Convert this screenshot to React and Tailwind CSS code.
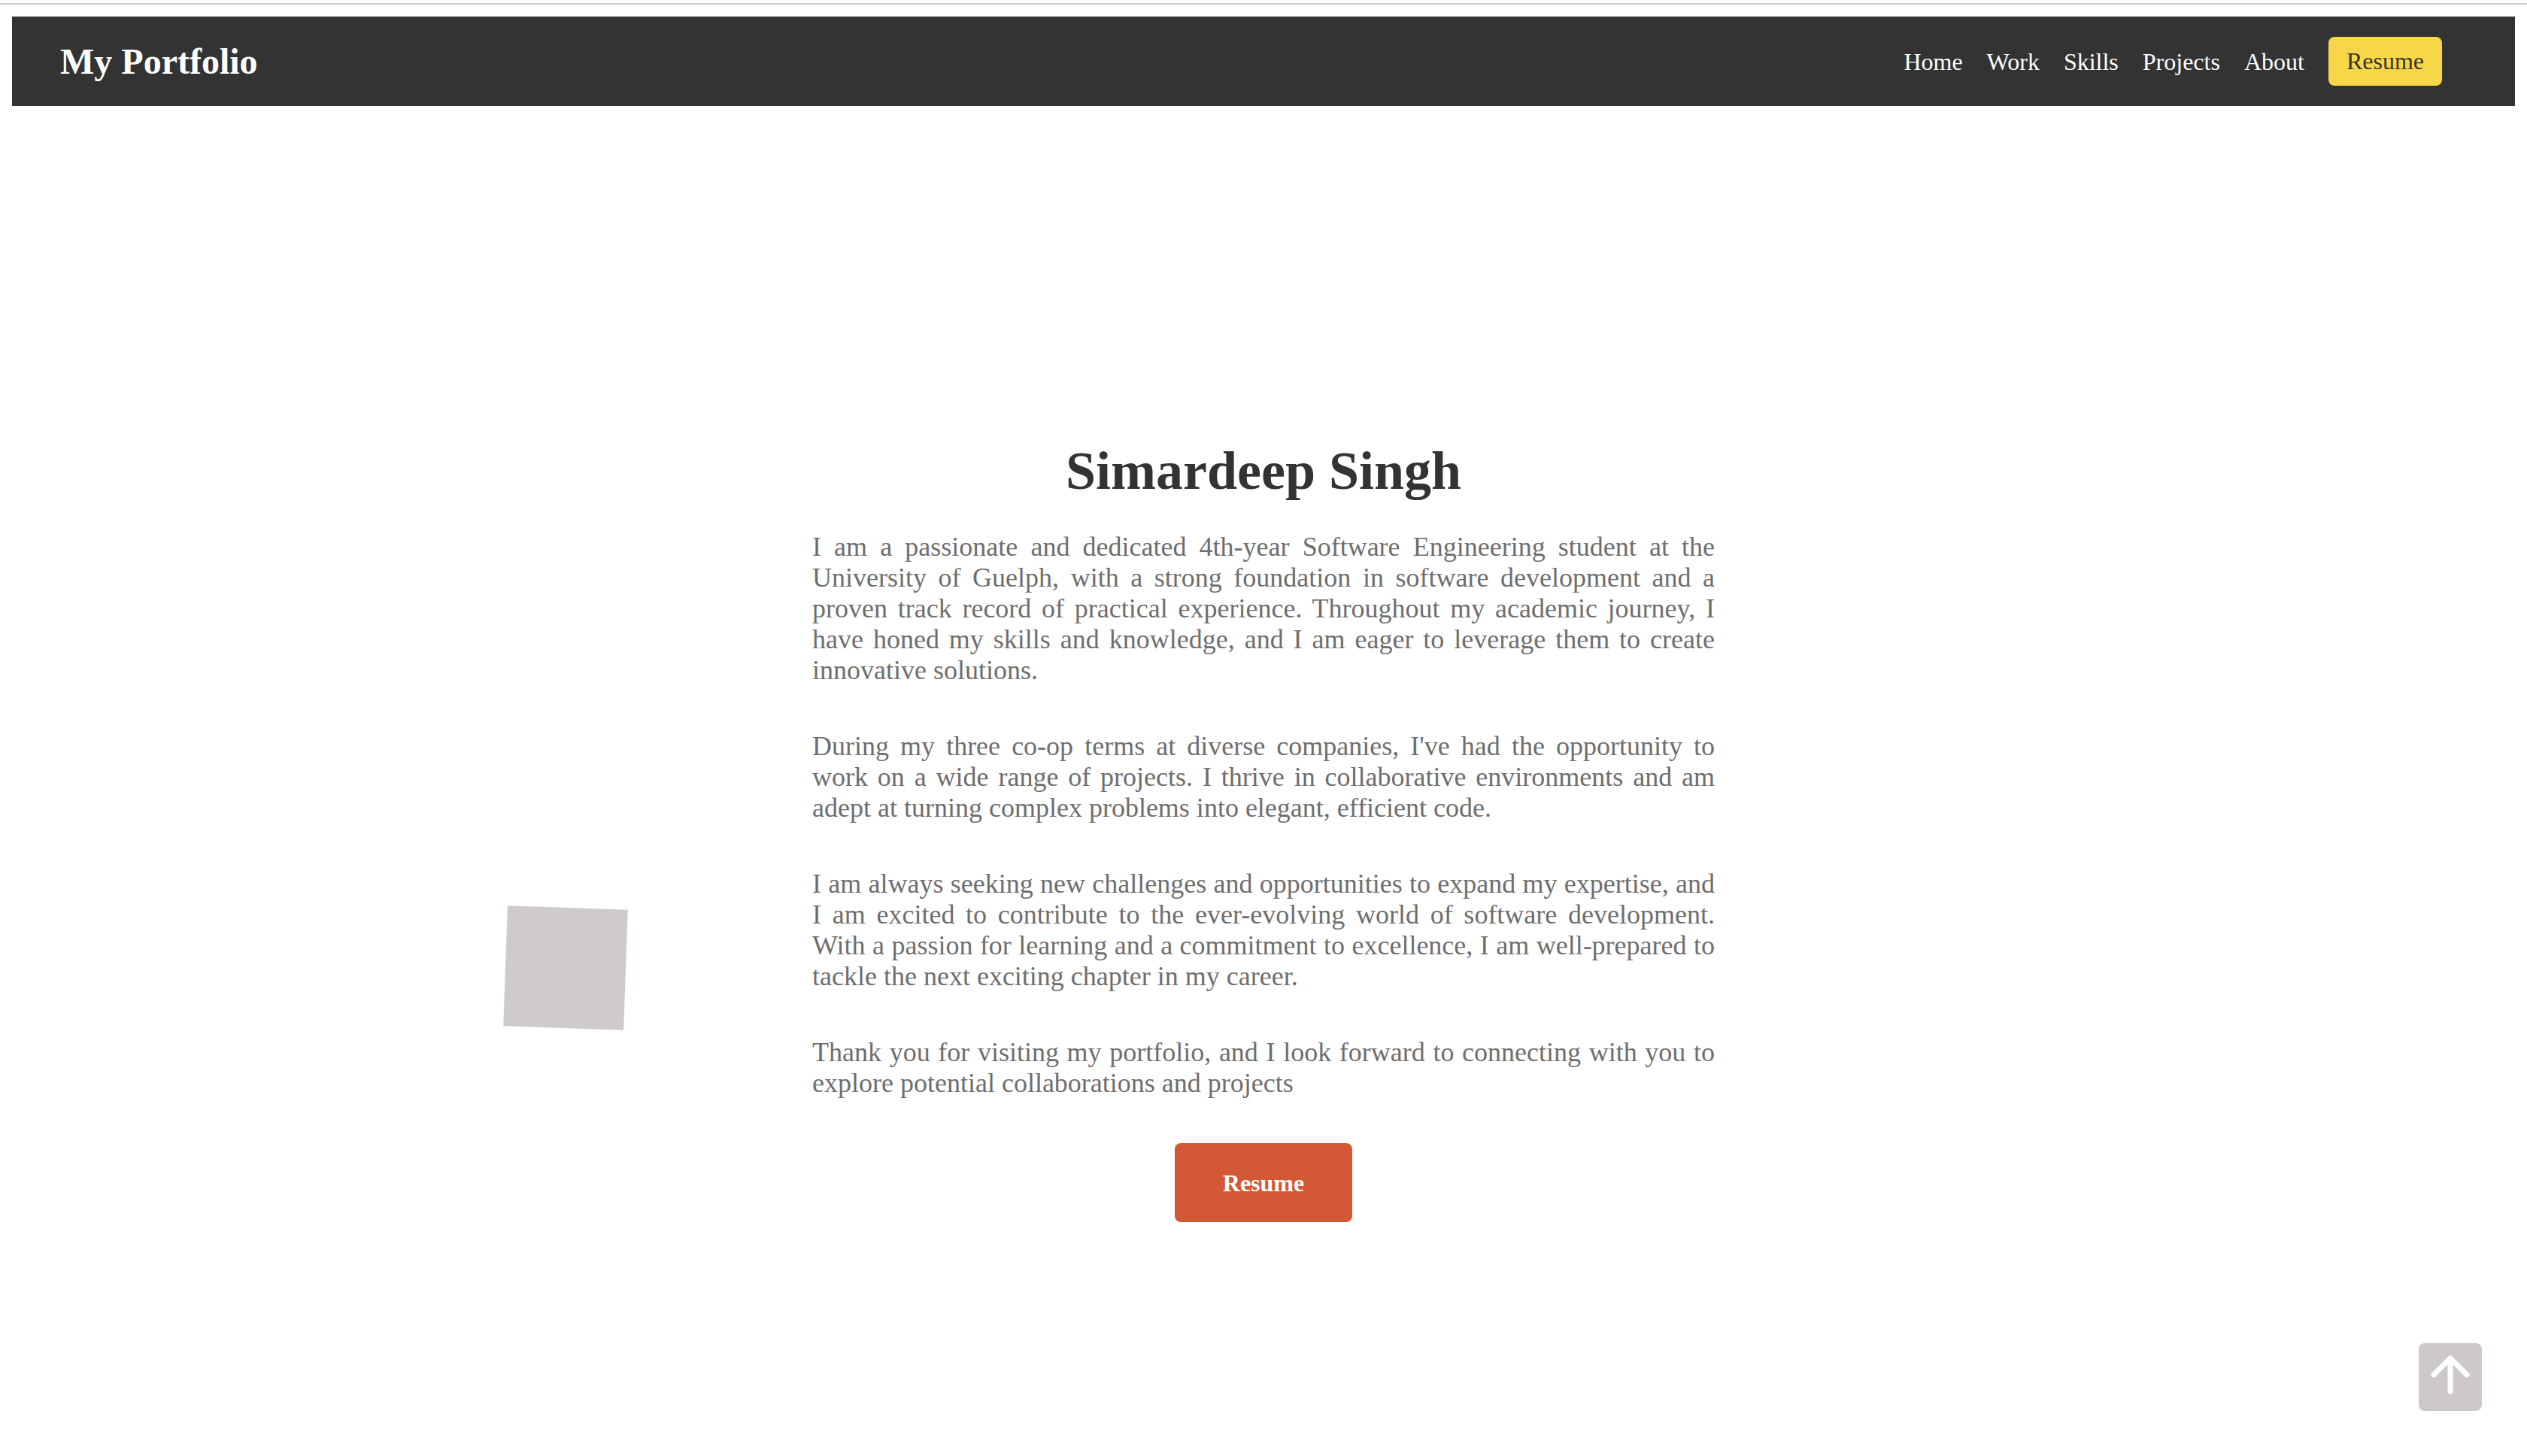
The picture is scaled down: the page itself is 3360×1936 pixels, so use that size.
import React from 'react';

const navLinks = ['Home', 'Work', 'Skills', 'Projects', 'About'];

const paragraphs = [
    "I am a passionate and dedicated 4th-year Software Engineering student at the University of Guelph, with a strong foundation in software development and a proven track record of practical experience. Throughout my academic journey, I have honed my skills and knowledge, and I am eager to leverage them to create innovative solutions.",
    "During my three co-op terms at diverse companies, I've had the opportunity to work on a wide range of projects. I thrive in collaborative environments and am adept at turning complex problems into elegant, efficient code.",
    "I am always seeking new challenges and opportunities to expand my expertise, and I am excited to contribute to the ever-evolving world of software development. With a passion for learning and a commitment to excellence, I am well-prepared to tackle the next exciting chapter in my career.",
    "Thank you for visiting my portfolio, and I look forward to connecting with you to explore potential collaborations and projects",
];

const App = () => {
    return (
        <div className="relative h-screen overflow-hidden bg-white font-['Liberation_Serif','Times_New_Roman',serif]">
            {/* top hairline */}
            <div className="pt-1">
                <div className="h-[2px] bg-[#cccccc]"></div>
            </div>

            {/* Navbar */}
            <div className="px-4 pt-4">
                <nav className="h-[119px] bg-[#333333] flex items-center justify-between pl-16 pr-[97px]">
                    <h1 className="text-[48px] leading-[56px] font-bold text-white">My Portfolio</h1>
                    <ul className="flex items-center gap-8 text-[32px] text-white">
                        {navLinks.map(link => (
                            <li key={link}>
                                <a href="#" className="leading-[35px]">{link}</a>
                            </li>
                        ))}
                        <li>
                            <a href="#" className="block px-6 py-[15px] leading-[35px] bg-[#f7d748] text-[#333333] rounded-lg">Resume</a>
                        </li>
                    </ul>
                </nav>
            </div>

            {/* About */}
            <main className="flex flex-col items-center pt-[445px]">
                <h2 className="text-[72px] leading-[80px] font-bold text-[#333333] mb-[41px]">Simardeep Singh</h2>
                <div className="w-[1200px] flex flex-col gap-[60px]">
                    {paragraphs.map((p, i) => (
                        <p key={i} className="text-[36px] leading-[41px] text-[#6e6e6e] text-justify">{p}</p>
                    ))}
                </div>
                <button className="mt-[59px] w-[236px] h-[105px] bg-[#d35836] text-white text-[32px] font-bold rounded-lg">
                    Resume
                </button>
            </main>

            {/* floating decoration */}
            <div className="absolute left-[672px] top-[1207px] w-[160px] h-[160px] bg-[#cfcbcb] rotate-2"></div>

            {/* scroll to top */}
            <button className="fixed right-[60px] bottom-[60px] w-[84px] h-[90px] bg-[#cdc9c9] rounded-lg">
                <svg width="84" height="90" viewBox="0 0 84 90" fill="none">
                    <path d="M42 64V20M20 42L42 20L64 42" stroke="white" strokeWidth="7" strokeLinecap="round" strokeLinejoin="round" />
                </svg>
            </button>
        </div>
    );
};

export default App;
